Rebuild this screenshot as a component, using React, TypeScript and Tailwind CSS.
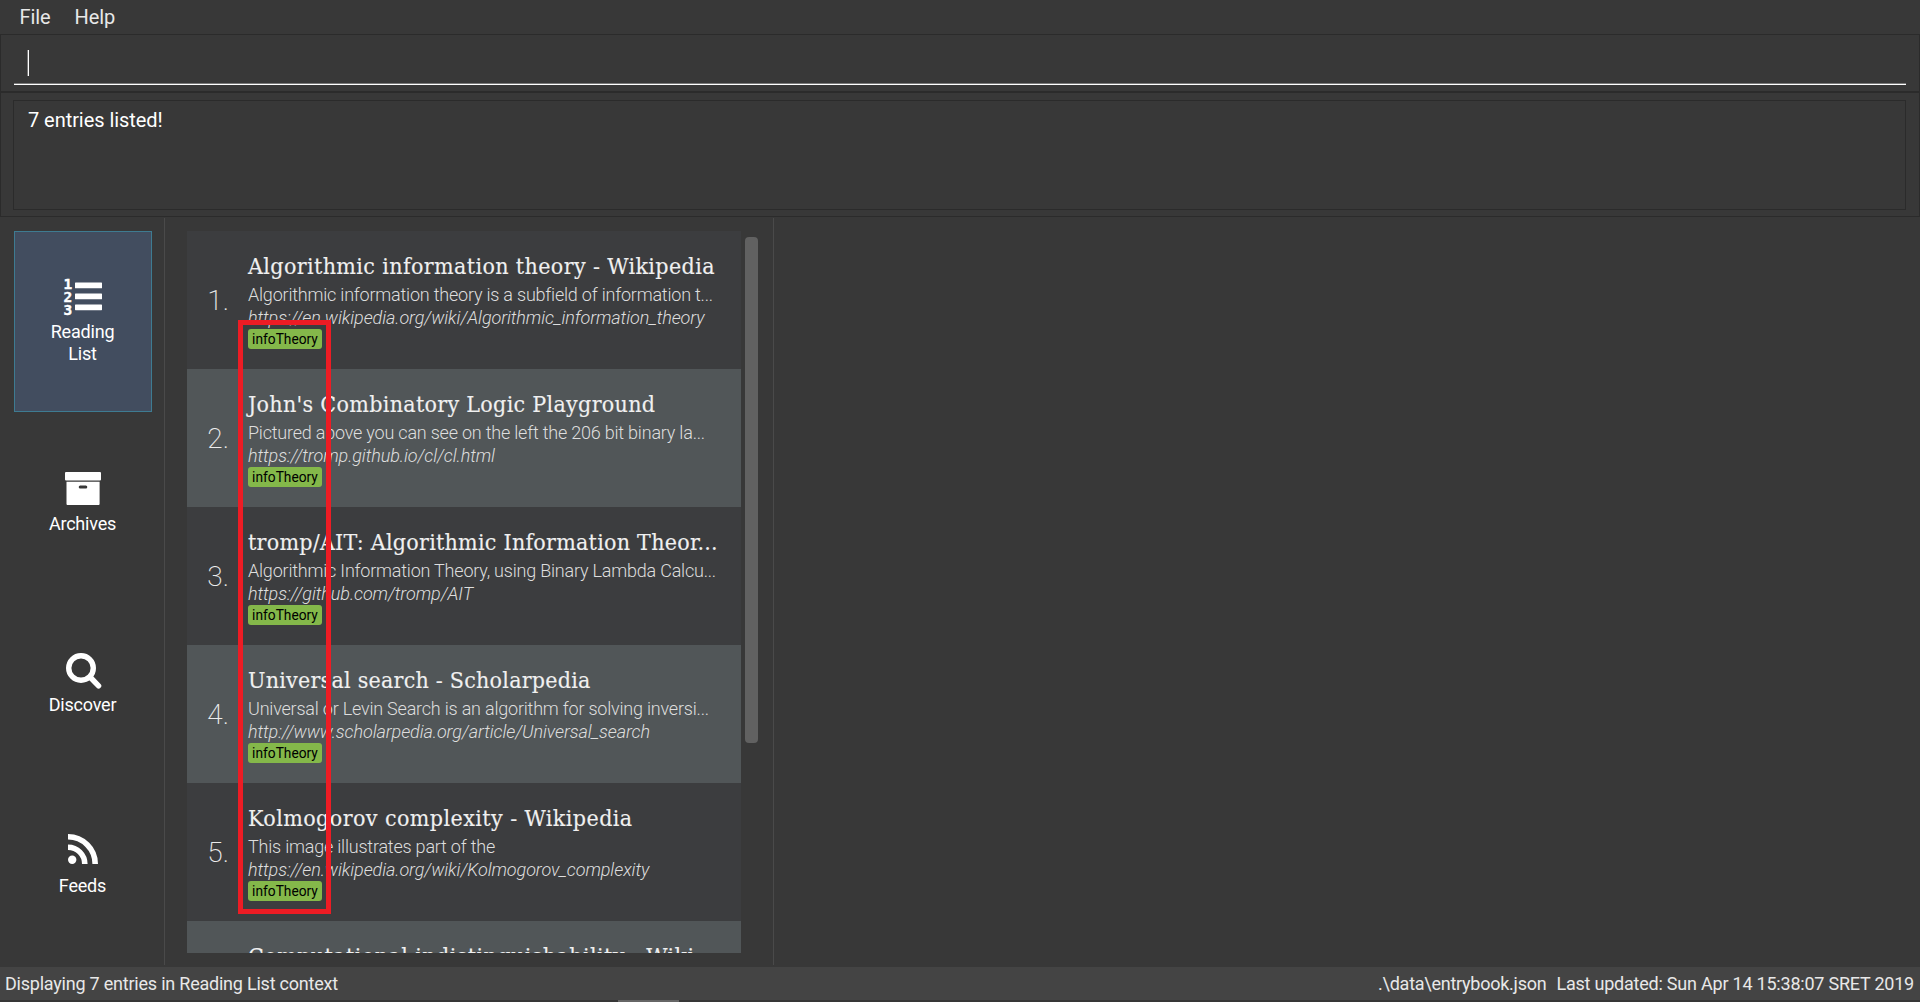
import type { ReactNode } from "react";

type Entry = {
  title: string;
  titleClass: string;
  description?: string;
  link?: string;
};

const entries: Entry[] = [
  {
    title: "Algorithmic information theory - Wikipedia",
    titleClass: "tracking-[0.37px]",
    description: "Algorithmic information theory is a subfield of information t...",
    link: "https://en.wikipedia.org/wiki/Algorithmic_information_theory",
  },
  {
    title: "John's Combinatory Logic Playground",
    titleClass: "tracking-[0.3px]",
    description: "Pictured above you can see on the left the 206 bit binary la...",
    link: "https://tromp.github.io/cl/cl.html",
  },
  {
    title: "tromp/AIT: Algorithmic Information Theor...",
    titleClass: "tracking-[0.24px]",
    description: "Algorithmic Information Theory, using Binary Lambda Calcu...",
    link: "https://github.com/tromp/AIT",
  },
  {
    title: "Universal search - Scholarpedia",
    titleClass: "tracking-[0.23px]",
    description: "Universal or Levin Search is an algorithm for solving inversi...",
    link: "http://www.scholarpedia.org/article/Universal_search",
  },
  {
    title: "Kolmogorov complexity - Wikipedia",
    titleClass: "tracking-[0.42px]",
    description: "This image illustrates part of the",
    link: "https://en.wikipedia.org/wiki/Kolmogorov_complexity",
  },
  {
    title: "Computational indistinguishability - Wiki...",
    titleClass: "tracking-[0.42px]",
  },
];

function Icon({ children }: { children: ReactNode }) {
  return (
    <svg width="40" height="40" viewBox="0 0 40 40" fill="white" className="overflow-visible">
      {children}
    </svg>
  );
}

function ListIcon() {
  return (
    <Icon>
      <g fontFamily="'DejaVu Sans Mono', monospace" fontWeight="700" fontSize="14.5" stroke="white" strokeWidth="0.4">
        <text x="0.6" y="13.6">1</text>
        <text x="0.6" y="26.8">2</text>
        <text x="0.6" y="40">3</text>
      </g>
      <rect x="12" y="7.5" width="27" height="5.8" rx="0.6" />
      <rect x="12" y="18.5" width="27" height="5.8" rx="0.6" />
      <rect x="12" y="29.4" width="27" height="5.8" rx="0.6" />
    </Icon>
  );
}

function ArchiveIcon() {
  return (
    <Icon>
      <rect x="2" y="5" width="36" height="8.6" rx="1" />
      <path
        fillRule="evenodd"
        d="M3.5 14.8H36.6V37a1 1 0 0 1-1 1H4.5a1 1 0 0 1-1-1ZM17.2 18.5a1.5 1.5 0 0 0 0 3H22.8a1.5 1.5 0 0 0 0-3Z"
      />
    </Icon>
  );
}

function SearchIcon() {
  return (
    <Icon>
      <g fill="none" stroke="white" strokeWidth="5.4" strokeLinecap="round">
        <circle cx="18" cy="20" r="12.3" />
        <path d="M27.5 29.5 35.6 37.8" />
      </g>
    </Icon>
  );
}

function FeedIcon() {
  return (
    <Icon>
      <circle cx="9.2" cy="30.8" r="4.2" />
      <g fill="none" stroke="white" strokeWidth="5.6">
        <path d="M5 18.2A16.8 16.8 0 0 1 21.8 35" />
        <path d="M5 7.8A27.2 27.2 0 0 1 32.2 35" />
      </g>
    </Icon>
  );
}

function NavItem({ icon, label, selected }: { icon: ReactNode; label: string; selected?: boolean }) {
  return (
    <div
      className={
        "flex h-[181px] flex-col items-center justify-center gap-[6px] border pb-[3px] " +
        (selected ? "border-[#3e7b91] bg-[#424d5f]" : "border-transparent")
      }
    >
      {icon}
      <span className="w-[74px] pr-px text-center text-[18px] leading-[22px] tracking-[-0.2px] text-white">{label}</span>
    </div>
  );
}

function EntryRow({ entry, index }: { entry: Entry; index: number }) {
  return (
    <div className={"flex h-[138px] shrink-0 " + (index % 2 ? "bg-[#515658]" : "bg-[#3c3d3f]")}>
      <div className="w-[61px] shrink-0 pt-[50px] pr-[19px] text-right text-[28px] leading-[40px] font-extralight text-[#ececec]">
        {entry.description && `${index + 1}.`}
      </div>
      <div className="pt-5 whitespace-nowrap">
        <div
          className={
            "font-['DejaVu_Serif_Condensed','DejaVu_Serif',serif] text-[23px] leading-[30px] text-[#f0f0f0] [-webkit-text-stroke:0.12px_#f0f0f0] " +
            entry.titleClass
          }
        >
          {entry.title}
        </div>
        {entry.description && (
          <>
            <div className="mt-[3px] text-[18px] leading-[22px] font-light tracking-[-0.21px] text-[#dedede]">
              {entry.description}
            </div>
            <div className="mt-px text-[18px] leading-[22px] font-light tracking-[-0.09px] text-[#dedede] italic">
              {entry.link}
            </div>
            <div className="flex h-5 w-[74px] items-center justify-center rounded-[3px] bg-[#84b84a] text-[13.75px] leading-5 text-black">
              infoTheory
            </div>
          </>
        )}
      </div>
    </div>
  );
}

export default function App() {
  return (
    <div className="flex h-[1002px] w-[1920px] flex-col overflow-hidden bg-[#383838] font-['Roboto',sans-serif] text-[#e8e8e8]">
      <nav className="flex h-[34px] shrink-0 items-center gap-6 pl-[19.5px] text-[20px] leading-[34px] tracking-[-0.1px]">
        <span>File</span>
        <span>Help</span>
      </nav>

      <div className="h-[58px] shrink-0 border border-[#2b2b2b] px-[13px] pt-[15px]">
        <div className="flex h-[35px] border-b border-white pl-[13px] shadow-[inset_0_-1px_0_#7a7a7a]">
          <div className="h-[26px] w-[2px] border-r border-white bg-[#7a7a7a]" />
        </div>
      </div>

      <div className="h-[125px] shrink-0 border border-[#2b2b2b] pt-[7px] pr-[13px] pl-3">
        <div className="h-[110px] border border-[#2b2b2b] pt-[7px] pl-[14px] text-[20px] leading-6 tracking-[-0.05px] text-white">
          7 entries listed!
        </div>
      </div>

      <main className="flex min-h-0 flex-1 pt-px">
        <aside className="h-[747px] w-[165px] border-r border-[#4a4a4a] pt-[13px] pr-3 pl-[14px]">
          <NavItem icon={<ListIcon />} label="Reading List" selected />
          <NavItem icon={<ArchiveIcon />} label="Archives" />
          <NavItem icon={<SearchIcon />} label="Discover" />
          <NavItem icon={<FeedIcon />} label="Feeds" />
        </aside>

        <section className="flex h-[747px] w-[609px] border-r border-[#4a4a4a] pt-[13px] pl-[22px]">
          <div className="relative h-[722px] w-[554px]">
            <div className="flex h-full flex-col overflow-hidden">
              {entries.map((entry, index) => (
                <EntryRow key={entry.title} entry={entry} index={index} />
              ))}
            </div>
            <div className="absolute top-[89px] left-[51px] h-[594px] w-[93px] border-[5px] border-[#ed1c24]" />
          </div>
          <div className="mt-[6px] ml-[4px] h-[506px] w-[13px] rounded-[4px] bg-[#616161]" />
        </section>
      </main>

      <footer className="flex h-[33px] shrink-0 items-center bg-[#444444] pr-[6px] pl-[5px] text-[18px] leading-[33px] tracking-[-0.22px]">
        <span>Displaying 7 entries in Reading List context</span>
        <span className="ml-auto tracking-[-0.25px]">.\data\entrybook.json</span>
        <span className="ml-[10px]">Last updated: Sun Apr 14 15:38:07 SRET 2019</span>
      </footer>
      <div className="h-[2px] shrink-0 bg-[#363636] pl-[618px]">
        <div className="h-full w-[61px] bg-[#666666]" />
      </div>
    </div>
  );
}
